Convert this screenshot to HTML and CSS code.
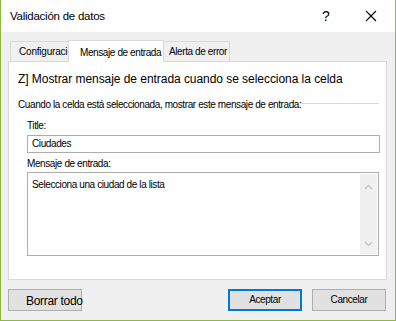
FILE: index.html
```html
<!DOCTYPE html>
<html lang="es">
<head>
  <meta charset="UTF-8">
  <title>Validación de datos</title>
  <link rel="stylesheet" href="styles.css">
</head>
<body>
  <div class="window">
    <div class="titlebar">
      <div class="title">Validación de datos</div>
      <div class="help">?</div>
      <div class="close">
        <svg width="12" height="12" viewBox="0 0 12 12"><path d="M1 1L11 11M11 1L1 11" stroke="#000" stroke-width="1.1" fill="none"/></svg>
      </div>
    </div>
    <div class="tabs">
      <div class="tab first">Configuración</div>
      <div class="tab active">Mensaje de entrada</div>
      <div class="tab last">Alerta de error</div>
    </div>
    <div class="panel">
      <div class="check">Z] Mostrar mensaje de entrada cuando se selecciona la celda</div>
      <div class="group"><span>Cuando la celda está seleccionada, mostrar este mensaje de entrada:</span><div class="line"></div></div>
      <div class="label">Title:</div>
      <div class="input">Ciudades</div>
      <div class="label second">Mensaje de entrada:</div>
      <div class="textarea">
        <div class="text">Selecciona una ciudad de la lista</div>
        <div class="scroll">
          <svg width="9" height="6" viewBox="0 0 9 6"><path d="M1 5L4.5 1.5L8 5" stroke="#c2c2c2" stroke-width="1.3" fill="none"/></svg>
          <svg width="9" height="6" viewBox="0 0 9 6"><path d="M1 1L4.5 4.5L8 1" stroke="#c2c2c2" stroke-width="1.3" fill="none"/></svg>
        </div>
      </div>
    </div>
    <div class="buttons">
      <div class="button clear">Borrar todo</div>
      <div class="spacer"></div>
      <div class="button ok">Aceptar</div>
      <div class="button">Cancelar</div>
    </div>
  </div>
</body>
</html>
```

FILE: styles.css
```css
body { margin:0; padding:0; font-family:"Liberation Sans", Arial, sans-serif; color:#000; font-size:10px; letter-spacing:-0.4px; }
.window { width:396px; height:321px; box-sizing:border-box; background:#f0f0f0; border:1px solid #8fb83e; border-top:none; }
.titlebar { height:32px; background:#fff; display:flex; align-items:center; }
.title { flex:1; padding-left:9px; font-size:11.5px; letter-spacing:-0.25px; }
.help { width:20px; font-size:14px; margin-right:29px; text-align:center; letter-spacing:0; }
.close { width:12px; height:12px; margin-right:18px; display:flex; }
.tabs { display:flex; align-items:flex-end; height:29px; padding-left:9px; }
.tab { height:19px; line-height:20px; border:1px solid #d9d9d9; border-bottom:none; background:#f0f0f0; white-space:nowrap; box-sizing:border-box; }
.tab.first { width:58px; padding:0 0 0 8px; overflow:hidden; border-right:none; height:20px; letter-spacing:-0.2px; }
.tab.active { height:22px; line-height:23px; background:#fff; padding:0 0 0 11px; width:96px; position:relative; top:1px; }
.tab.last { width:66px; height:20px; padding-left:5px; border-left:none; }
.panel { margin:0 8px 0 7px; height:217px; background:#fff; border:1px solid #d9d9d9; padding:0 8px 0 9px; }
.check { font-size:12px; letter-spacing:-0.05px; margin-top:8px; height:18px; line-height:18px; }
.group { display:flex; align-items:flex-start; margin-top:10px; height:14px; line-height:14px; }
.group .line { flex:1; border-top:1px solid #d9d9d9; margin-top:5px; margin-left:1px; margin-right:-1px; }
.label { margin:7px 0 0 9px; height:14px; line-height:14px; }
.label.second { margin-top:4px; }
.input { margin:2px 0 0 9px; width:353px; height:18px; box-sizing:border-box; border:1px solid #adadad; line-height:16px; padding-left:4px; }
.textarea { margin:1px 0 0 9px; width:352px; height:84px; box-sizing:border-box; border:1px solid #adadad; display:flex; }
.textarea .text { flex:1; line-height:14px; padding:5px 0 0 4px; }
.scroll { width:17px; margin:1px 1px 1px 0; background:#f0f0f0; display:flex; flex-direction:column; justify-content:space-between; align-items:center; padding:10px 0 7px; box-sizing:border-box; }
.buttons { display:flex; padding:9px 9px 0 7px; }
.spacer { flex:1; }
.button { width:74px; height:22px; box-sizing:border-box; background:#e1e1e1; border:1px solid #adadad; line-height:20px; text-align:center; margin-left:10px; }
.button.clear { margin-left:0; text-align:left; padding-left:17px; white-space:nowrap; font-size:12px; letter-spacing:-0.3px; line-height:23px; }
.button.ok { border:2px solid #0078d7; line-height:18px; margin-left:0; }
```
